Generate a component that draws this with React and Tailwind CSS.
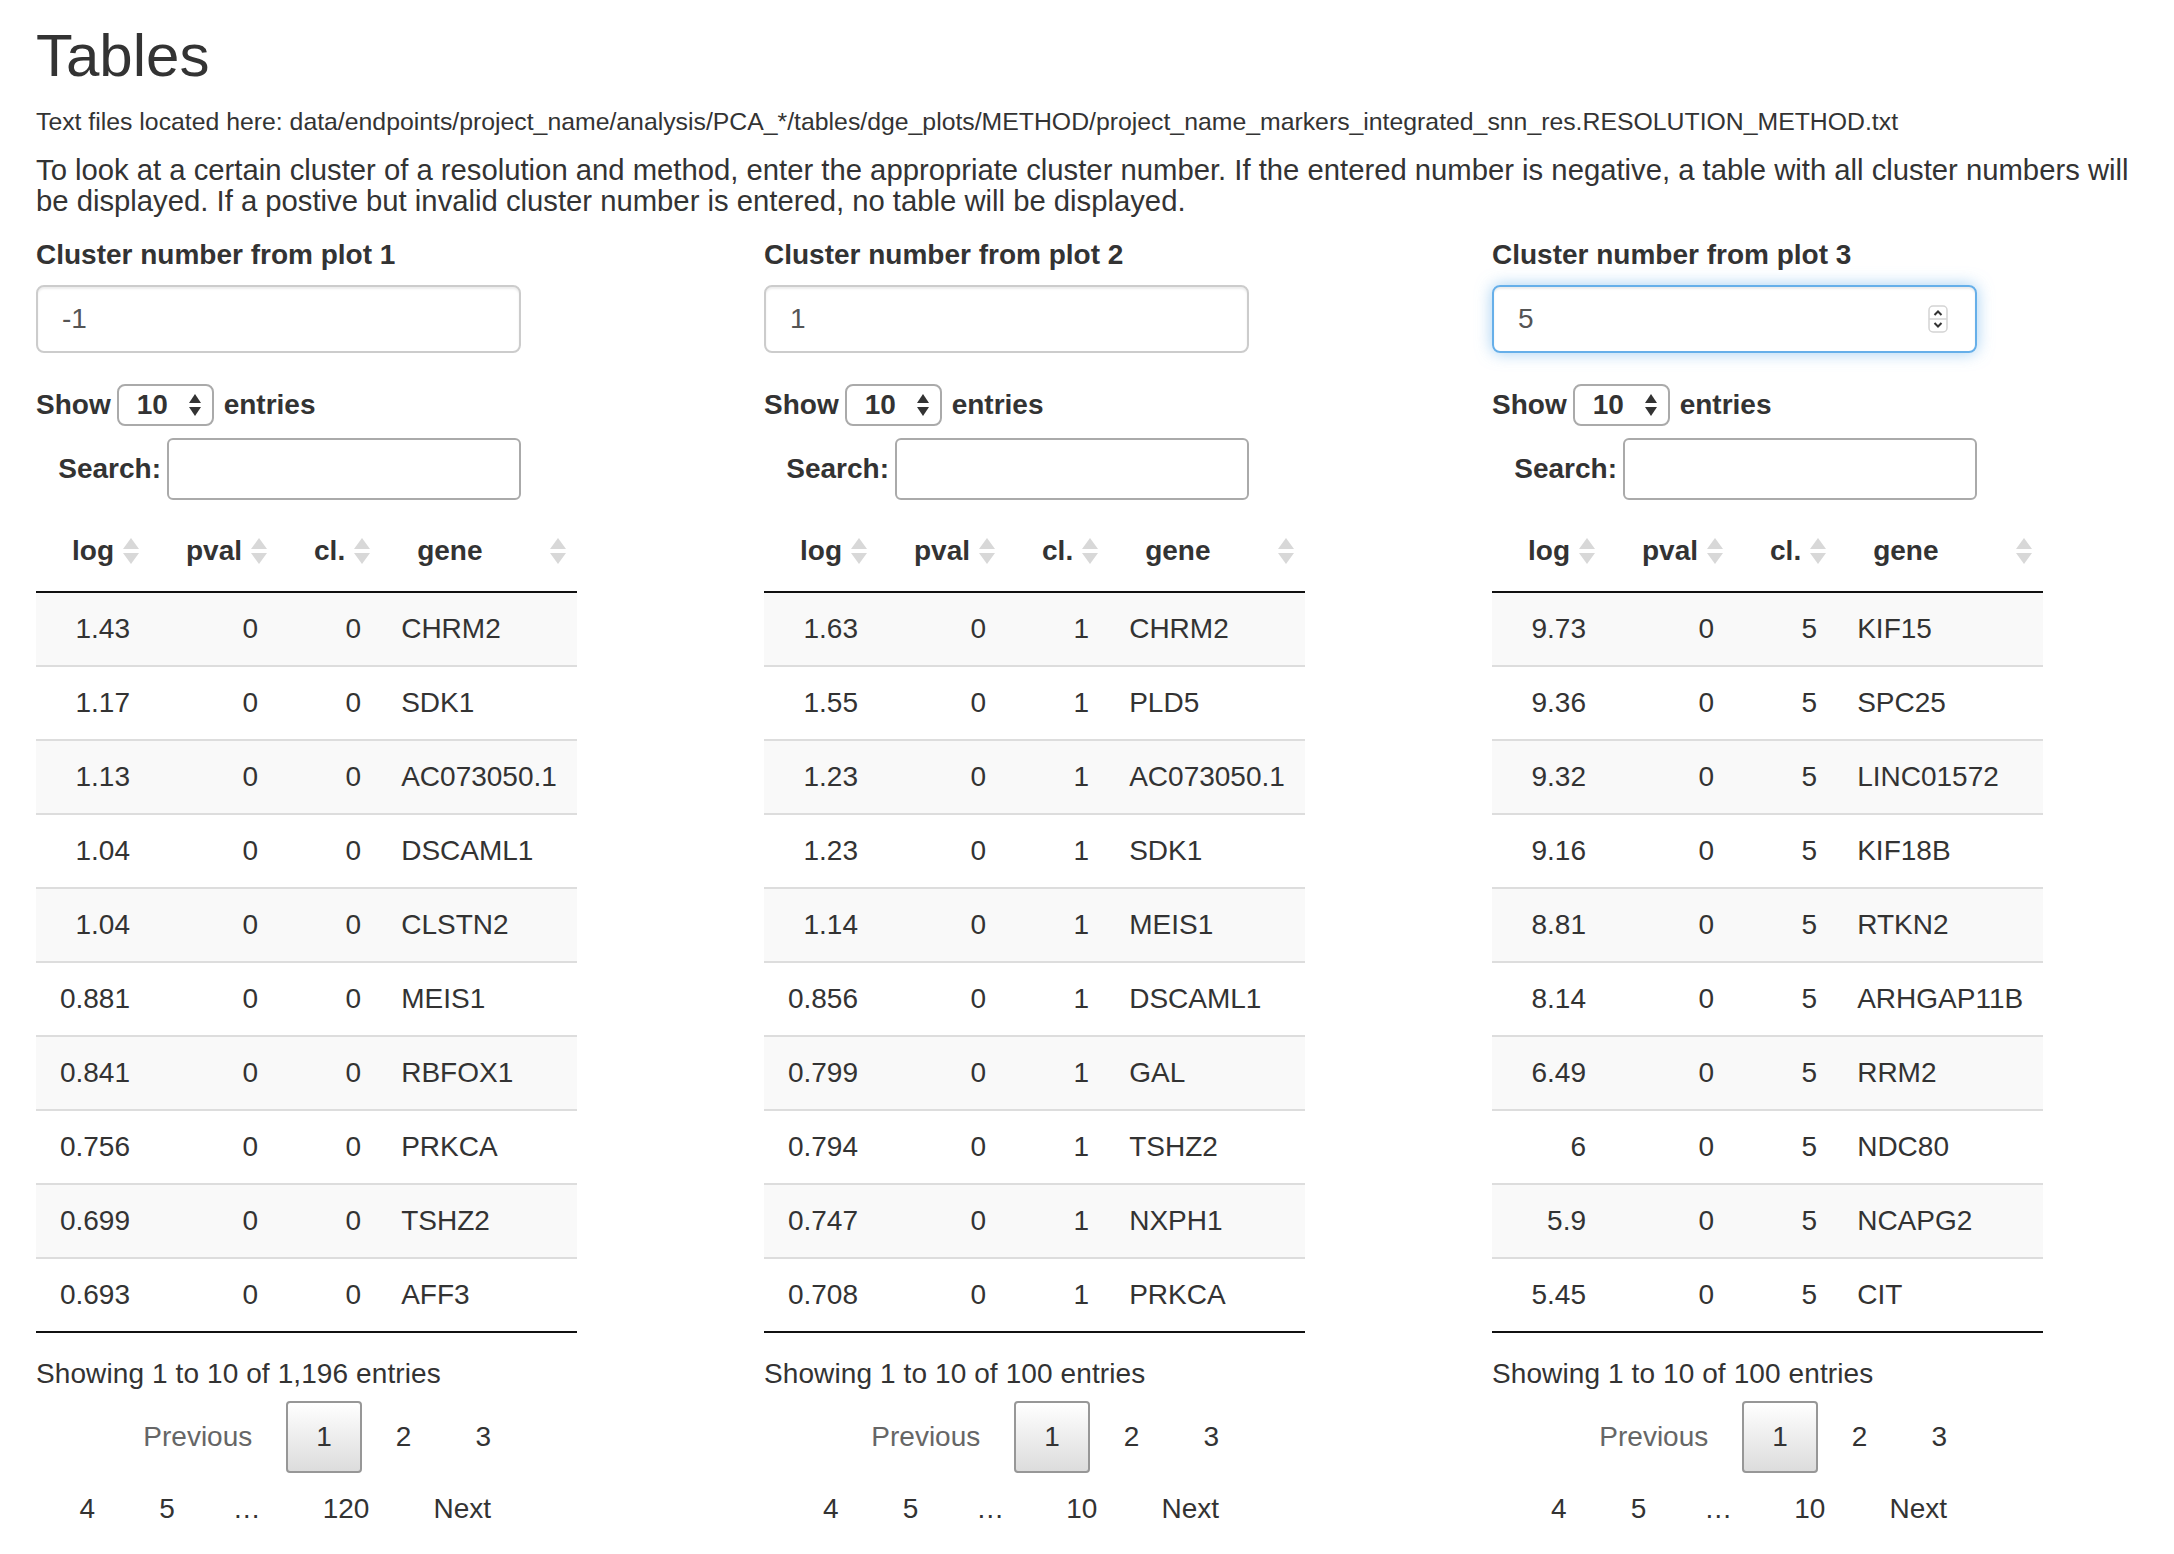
import React from "react";

const plots = [
  {
    label: "Cluster number from plot 1",
    value: "-1",
    focused: false,
    total: "1,196",
    last: "120",
    rows: [
      ["1.43", "0", "0", "CHRM2"],
      ["1.17", "0", "0", "SDK1"],
      ["1.13", "0", "0", "AC073050.1"],
      ["1.04", "0", "0", "DSCAML1"],
      ["1.04", "0", "0", "CLSTN2"],
      ["0.881", "0", "0", "MEIS1"],
      ["0.841", "0", "0", "RBFOX1"],
      ["0.756", "0", "0", "PRKCA"],
      ["0.699", "0", "0", "TSHZ2"],
      ["0.693", "0", "0", "AFF3"],
    ],
  },
  {
    label: "Cluster number from plot 2",
    value: "1",
    focused: false,
    total: "100",
    last: "10",
    rows: [
      ["1.63", "0", "1", "CHRM2"],
      ["1.55", "0", "1", "PLD5"],
      ["1.23", "0", "1", "AC073050.1"],
      ["1.23", "0", "1", "SDK1"],
      ["1.14", "0", "1", "MEIS1"],
      ["0.856", "0", "1", "DSCAML1"],
      ["0.799", "0", "1", "GAL"],
      ["0.794", "0", "1", "TSHZ2"],
      ["0.747", "0", "1", "NXPH1"],
      ["0.708", "0", "1", "PRKCA"],
    ],
  },
  {
    label: "Cluster number from plot 3",
    value: "5",
    focused: true,
    total: "100",
    last: "10",
    rows: [
      ["9.73", "0", "5", "KIF15"],
      ["9.36", "0", "5", "SPC25"],
      ["9.32", "0", "5", "LINC01572"],
      ["9.16", "0", "5", "KIF18B"],
      ["8.81", "0", "5", "RTKN2"],
      ["8.14", "0", "5", "ARHGAP11B"],
      ["6.49", "0", "5", "RRM2"],
      ["6", "0", "5", "NDC80"],
      ["5.9", "0", "5", "NCAPG2"],
      ["5.45", "0", "5", "CIT"],
    ],
  },
];

const SortIcon = () => (
  <svg width="18" height="28" viewBox="0 0 18 28" className="shrink-0">
    <path d="M9 1 L17 12 L1 12 Z" fill="#d8d8d8" />
    <path d="M1 16 L17 16 L9 27 Z" fill="#d8d8d8" />
  </svg>
);

const Th = ({ children, right }) => (
  <th className="py-5 pl-9 pr-[10px] font-bold">
    <div className={right ? "flex items-center justify-end gap-2" : "flex items-center gap-2"}>
      <span className={right ? "" : "flex-1 text-left"}>{children}</span>
      <SortIcon />
    </div>
  </th>
);

const PageBtn = ({ children, current, disabled }) => (
  <span
    className={
      current
        ? "ml-1 px-7 py-[14px] border-2 border-[#979797] rounded-[4px] bg-gradient-to-b from-white to-[#dcdcdc] text-[#333]"
        : disabled
        ? "ml-1 px-7 py-[14px] border-2 border-transparent text-[#666]"
        : "ml-1 px-7 py-[14px] border-2 border-transparent text-[#333]"
    }
  >
    {children}
  </span>
);

const PlotColumn = ({ plot }) => (
  <div className="w-[728px] shrink-0">
    <div className="w-[485px]">
      <div className="font-bold leading-[40px] mb-[10px]">{plot.label}</div>
      <div
        className={
          plot.focused
            ? "h-[68px] flex items-center justify-between pl-6 pr-[27px] rounded-[8px] border-2 border-[#66afe9] shadow-[inset_0_2px_2px_rgba(0,0,0,0.075),0_0_16px_rgba(102,175,233,0.6)] text-[#555]"
            : "h-[68px] flex items-center pl-6 rounded-[8px] border-2 border-[#ccc] shadow-[inset_0_2px_2px_rgba(0,0,0,0.075)] text-[#555]"
        }
      >
        <span>{plot.value}</span>
        {plot.focused && (
          <svg width="20" height="28" viewBox="0 0 20 28">
            <rect x="1" y="1" width="18" height="26" rx="4" fill="#fff" stroke="#d4d4d4" strokeWidth="1.5" />
            <line x1="1" y1="14" x2="19" y2="14" stroke="#d4d4d4" strokeWidth="1.5" />
            <path d="M6.5 10 L10 6.5 L13.5 10" fill="none" stroke="#333" strokeWidth="2" />
            <path d="M6.5 18 L10 21.5 L13.5 18" fill="none" stroke="#333" strokeWidth="2" />
          </svg>
        )}
      </div>

      <div className="mt-[31px] h-[42px] flex items-center font-bold">
        <span>Show</span>
        <div className="ml-[6px] w-[97px] h-[42px] flex items-center justify-between pl-[18px] pr-[10px] rounded-[8px] border-2 border-[#aaa]">
          <span>10</span>
          <svg width="14" height="24" viewBox="0 0 14 24">
            <path d="M7 1 L13 10 L1 10 Z" fill="#333" />
            <path d="M1 14 L13 14 L7 23 Z" fill="#333" />
          </svg>
        </div>
        <span className="ml-[10px]">entries</span>
      </div>

      <div className="mt-3 flex items-center justify-end font-bold">
        <span>Search:</span>
        <div className="ml-[6px] w-[354px] h-[62px] rounded-[6px] border-2 border-[#aaa] bg-white" />
      </div>

      <table className="mt-[11px] border-b-2 border-[#111] leading-[40px]">
        <thead>
          <tr className="border-b-2 border-[#111]">
            <Th right>log</Th>
            <Th right>pval</Th>
            <Th right>cl.</Th>
            <Th>gene</Th>
          </tr>
        </thead>
        <tbody>
          {plot.rows.map((r, i) => (
            <tr
              key={i}
              className={
                (i % 2 === 0 ? "bg-[#f9f9f9] " : "bg-white ") + (i > 0 ? "border-t-2 border-[#ddd]" : "")
              }
            >
              <td className="py-4 px-5 text-right">{r[0]}</td>
              <td className="py-4 px-5 text-right">{r[1]}</td>
              <td className="py-4 px-5 text-right">{r[2]}</td>
              <td className="py-4 px-5 text-left whitespace-nowrap">{r[3]}</td>
            </tr>
          ))}
        </tbody>
      </table>

      <div className="pt-[21px] leading-[40px] tracking-[0.1px]">Showing 1 to 10 of {plot.total} entries</div>

      <div className="pt-[7px] flex flex-wrap justify-end leading-[40px]">
        <PageBtn disabled>Previous</PageBtn>
        <PageBtn current>1</PageBtn>
        <PageBtn>2</PageBtn>
        <PageBtn>3</PageBtn>
        <PageBtn>4</PageBtn>
        <PageBtn>5</PageBtn>
        <span className="px-[26px] py-[14px] border-2 border-transparent">…</span>
        <PageBtn>{plot.last}</PageBtn>
        <PageBtn>Next</PageBtn>
      </div>
    </div>
  </div>
);

export default function App() {
  return (
    <div className="min-h-screen bg-white px-9 pb-6 text-[#333] text-[28px] font-['Liberation_Sans',Arial,sans-serif]">
      <h2 className="pt-[23px] text-[60px] leading-[66px] font-medium">Tables</h2>
      <p className="mt-[19px] text-[24.8px] leading-[27px]">
        Text files located here: data/endpoints/project_name/analysis/PCA_*/tables/dge_plots/METHOD/project_name_markers_integrated_snn_res.RESOLUTION_METHOD.txt
      </p>
      <p className="mt-[20px] text-[29.25px] leading-[31px]">
        To look at a certain cluster of a resolution and method, enter the appropriate cluster number. If the entered number is negative, a table with all cluster numbers will be displayed. If a postive but invalid cluster number is entered, no table will be displayed.
      </p>
      <div className="mt-[18px] flex">
        {plots.map((p) => (
          <PlotColumn key={p.label} plot={p} />
        ))}
      </div>
    </div>
  );
}
